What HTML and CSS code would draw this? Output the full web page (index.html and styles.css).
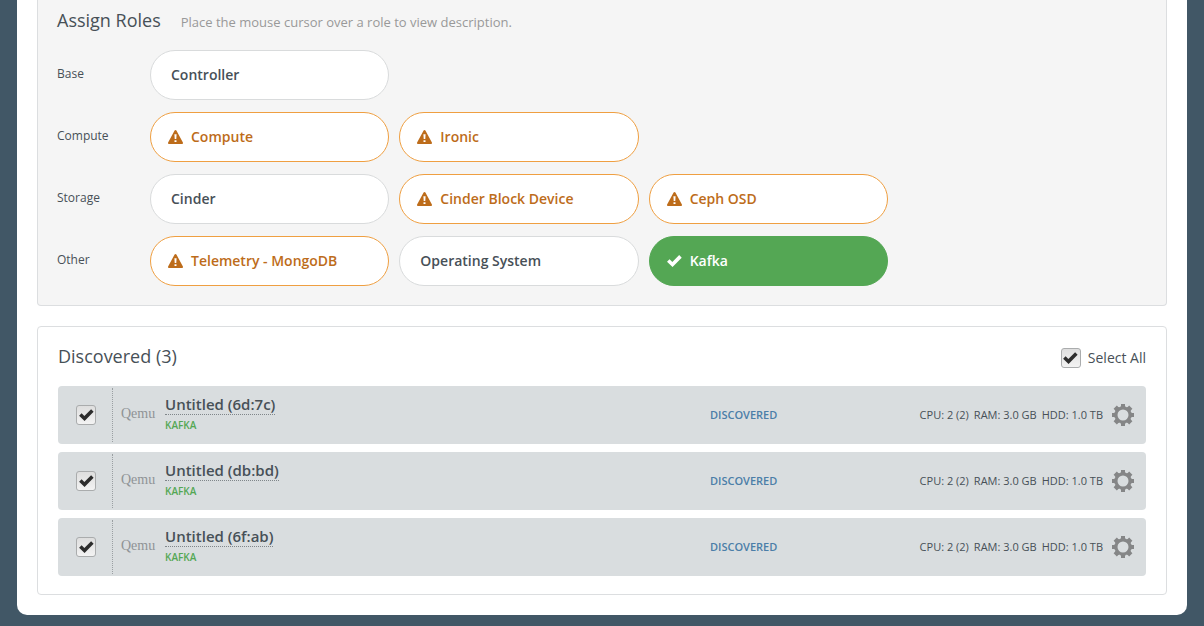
FILE: index.html
```html
<!DOCTYPE html>
<html lang="en">
<head>
<meta charset="utf-8">
<title>Assign Roles</title>
<link rel="stylesheet" href="styles.css">
</head>
<body>
<svg class="sprite" aria-hidden="true">
  <symbol id="warning" viewBox="0 0 15 14">
    <path fill="currentColor" fill-rule="evenodd" d="M7.500 0c.4 0 .7.200.9.600l6.500 12c.3.700 0 1.400-.8 1.400H.9c-.8 0-1.100-.7-.8-1.400L6.600.6c.2-.4.500-.6.900-.6zM6.400 4.300l.3 4.700h1.600l.3-4.700zM6.500 10.300v1.800h2v-1.800z"/>
  </symbol>
  <symbol id="check" viewBox="0 0 16 13">
    <path fill="currentColor" d="M0 7.400 2.700 4.700 5.700 7.600 13 .2 15.700 2.900 5.900 12.900z"/>
  </symbol>
  <symbol id="gear" viewBox="-11 -11 22 22">
    <g fill="currentColor">
      <path d="M-3-7.500-2-9V-11H2V-9L3-7.500zM-3 7.500-2 9V11H2V9L3 7.500z"/>
      <path transform="rotate(90)" d="M-3-7.500-2-9V-11H2V-9L3-7.500zM-3 7.500-2 9V11H2V9L3 7.500z"/>
      <path transform="rotate(45)" d="M-3-7.500-2.300-9V-11H2.300V-9L3-7.500zM-3 7.500-2.300 9V11H2.300V9L3 7.500z"/>
      <path transform="rotate(135)" d="M-3-7.500-2.300-9V-11H2.300V-9L3-7.500zM-3 7.500-2.300 9V11H2.300V9L3 7.500z"/>
    </g>
    <circle r="7" fill="none" stroke="currentColor" stroke-width="3"/>
  </symbol>
</svg>
<main class="page">
  <section class="panel roles">
    <header class="roles-head">
      <h2 class="title">Assign Roles</h2>
      <p class="hint">Place the mouse cursor over a role to view description.</p>
    </header>
    <div class="group">
      <h3 class="group-name">Base</h3>
      <div class="role-list">
        <button class="role" type="button">Controller</button>
      </div>
    </div>
    <div class="group">
      <h3 class="group-name">Compute</h3>
      <div class="role-list">
        <button class="role warn" type="button"><svg class="role-icon"><use href="#warning"/></svg>Compute</button>
        <button class="role warn" type="button"><svg class="role-icon"><use href="#warning"/></svg>Ironic</button>
      </div>
    </div>
    <div class="group">
      <h3 class="group-name">Storage</h3>
      <div class="role-list">
        <button class="role" type="button">Cinder</button>
        <button class="role warn" type="button"><svg class="role-icon"><use href="#warning"/></svg>Cinder Block Device</button>
        <button class="role warn" type="button"><svg class="role-icon"><use href="#warning"/></svg>Ceph OSD</button>
      </div>
    </div>
    <div class="group">
      <h3 class="group-name">Other</h3>
      <div class="role-list">
        <button class="role warn" type="button"><svg class="role-icon"><use href="#warning"/></svg>Telemetry - MongoDB</button>
        <button class="role" type="button">Operating System</button>
        <button class="role selected" type="button" aria-pressed="true"><svg class="role-icon"><use href="#check"/></svg>Kafka</button>
      </div>
    </div>
  </section>

  <section class="panel nodes">
    <header class="nodes-head">
      <h2 class="title">Discovered (3)</h2>
      <label class="select-all" for="all">
        <span class="tick"><input id="all" type="checkbox" checked><svg class="tick-mark"><use href="#check"/></svg></span>
        Select All
      </label>
    </header>
    <div class="node-list">
      <article class="node">
        <div class="node-select"><span class="tick"><input type="checkbox" aria-label="Untitled (6d:7c)" checked><svg class="tick-mark"><use href="#check"/></svg></span></div>
        <div class="vendor">Qemu</div>
        <div class="node-main"><div class="node-name">Untitled (6d:7c)</div><div class="node-role">KAFKA</div></div>
        <div class="status">DISCOVERED</div>
        <div class="specs"><span>CPU: 2 (2)</span><span>RAM: 3.0 GB</span><span>HDD: 1.0 TB</span></div>
        <button class="settings" type="button" aria-label="Settings"><svg class="gear"><use href="#gear"/></svg></button>
      </article>
      <article class="node">
        <div class="node-select"><span class="tick"><input type="checkbox" aria-label="Untitled (db:bd)" checked><svg class="tick-mark"><use href="#check"/></svg></span></div>
        <div class="vendor">Qemu</div>
        <div class="node-main"><div class="node-name">Untitled (db:bd)</div><div class="node-role">KAFKA</div></div>
        <div class="status">DISCOVERED</div>
        <div class="specs"><span>CPU: 2 (2)</span><span>RAM: 3.0 GB</span><span>HDD: 1.0 TB</span></div>
        <button class="settings" type="button" aria-label="Settings"><svg class="gear"><use href="#gear"/></svg></button>
      </article>
      <article class="node">
        <div class="node-select"><span class="tick"><input type="checkbox" aria-label="Untitled (6f:ab)" checked><svg class="tick-mark"><use href="#check"/></svg></span></div>
        <div class="vendor">Qemu</div>
        <div class="node-main"><div class="node-name">Untitled (6f:ab)</div><div class="node-role">KAFKA</div></div>
        <div class="status">DISCOVERED</div>
        <div class="specs"><span>CPU: 2 (2)</span><span>RAM: 3.0 GB</span><span>HDD: 1.0 TB</span></div>
        <button class="settings" type="button" aria-label="Settings"><svg class="gear"><use href="#gear"/></svg></button>
      </article>
    </div>
  </section>
</main>
</body>
</html>
```

FILE: styles.css
```css
* { box-sizing: border-box; }

body {
  margin: 0;
  padding: 0 17px 11px;
  background: #415766;
  color: #475057;
  font-family: "Open Sans", "Noto Sans", sans-serif;
  font-size: 14px;
  line-height: 20px;
}

h2, h3, p { margin: 0; }

button, input { font: inherit; margin: 0; }

.sprite { display: none; }

.page {
  background: #fff;
  border-radius: 0 0 10px 10px;
  padding: 0 20px 20px;
  display: flex;
  flex-direction: column;
  gap: 20px;
}

.panel {
  border: 1px solid #dcdee0;
  border-radius: 4px;
}

.title {
  font-size: 18px;
  font-weight: 400;
  line-height: 24px;
}

.roles {
  background: #f5f5f5;
  border-top: 0;
  border-radius: 0 0 4px 4px;
  padding: 8px 19px 19px;
  display: flex;
  flex-direction: column;
  gap: 12px;
}

.roles-head {
  display: flex;
  align-items: baseline;
  gap: 20px;
  padding-bottom: 6px;
}

.hint {
  color: #999;
  font-size: 13px;
  line-height: 20px;
}

.group { display: flex; }

.group-name {
  width: 93px;
  padding-top: 14px;
  font-size: 12px;
  font-weight: 400;
}

.role-list {
  flex: 0 1 738px;
  display: grid;
  grid-template-columns: repeat(3, 1fr);
  gap: 10px;
}

.role {
  height: 50px;
  padding: 0 20px;
  display: flex;
  align-items: center;
  background: #fff;
  border: 1px solid #d9dbdc;
  border-radius: 25px;
  color: #475057;
  font-weight: 600;
  text-align: left;
}

.role-icon {
  width: 15px;
  height: 14px;
  margin-right: 8px;
}

.warn {
  padding-left: 17px;
  border-color: #ef9f41;
  color: #bd6c1a;
}

.selected {
  padding-left: 17px;
  background: #54a754;
  border-color: #54a754;
  color: #fff;
}

.nodes { padding: 17px 20px 18px; }

.nodes-head {
  display: flex;
  justify-content: space-between;
  align-items: flex-start;
  padding-bottom: 16px;
}

.select-all {
  display: flex;
  align-items: center;
  gap: 7px;
  padding-top: 4px;
}

.nodes-head .title { padding-bottom: 2px; }

.tick {
  display: grid;
  place-items: center;
}

.tick > * { grid-area: 1 / 1; }

.tick input {
  appearance: none;
  width: 20px;
  height: 20px;
  border: 1px solid #aaacad;
  border-radius: 3px;
  background: linear-gradient(#dedede, #f3f3f3);
}

.tick-mark {
  width: 15px;
  height: 12px;
  color: #2d2d2d;
  pointer-events: none;
}

.node-list {
  display: flex;
  flex-direction: column;
  gap: 8px;
}

.node {
  min-height: 58px;
  display: grid;
  grid-template-columns: 55px 52px 13fr 5fr auto auto;
  align-items: center;
  background: #d9dddf;
  border-radius: 4px;
  padding: 2px 12px 2px 0;
}

.node-select {
  height: 54px;
  display: grid;
  place-items: center;
  padding-left: 2px;
  border-right: 1px dotted #9a9fa2;
}

.vendor {
  padding: 0 0 2px 8px;
  color: #8f9396;
  font-family: "Liberation Serif", serif;
  font-size: 14px;
}

.node-main { padding-bottom: 2px; }

.node-name {
  width: fit-content;
  border-bottom: 1px dotted #80868a;
  font-size: 15px;
  font-weight: 600;
}

.node-role {
  color: #54a754;
  font-size: 10px;
  font-weight: 600;
}

.status {
  color: #4b7ea8;
  font-size: 11px;
  font-weight: 600;
}

.specs {
  display: flex;
  gap: 5px;
  padding-right: 9px;
  font-size: 11px;
}

.settings {
  display: flex;
  padding: 0;
  border: 0;
  background: none;
  color: #858687;
}

.gear {
  width: 22px;
  height: 22px;
}
```
